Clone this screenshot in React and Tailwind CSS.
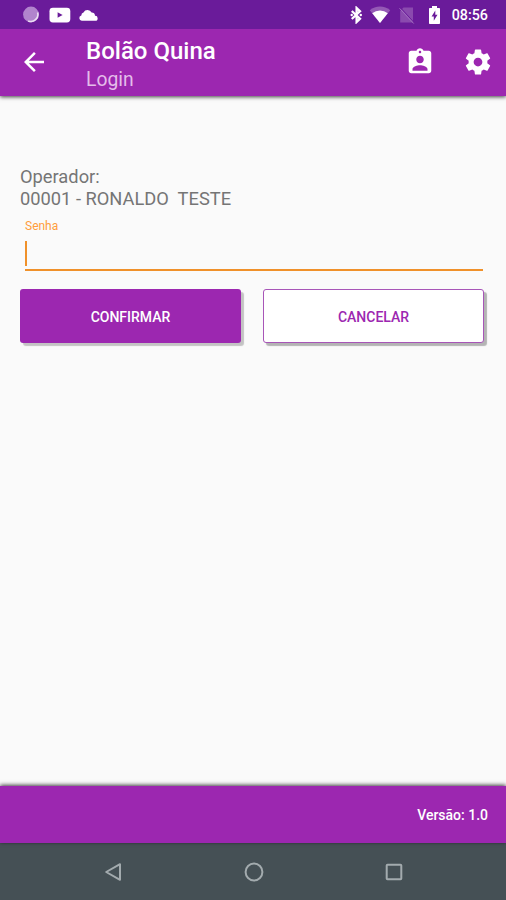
import React, { useState } from "react";
import { MdArrowBack } from "react-icons/md";

const StatusBar = () => (
  <div className="relative z-10 h-[29px] shrink-0 bg-[#6a1b9a] flex items-center justify-between pl-[23px] pr-[18px] text-white">
    <div className="flex items-center">
      <svg className="w-4 h-[17px]" viewBox="0 0 16 17">
        <circle cx="8" cy="8.5" r="7.9" fill="#b184cd" />
        <path
          d="M14.6 6.5a7 7 0 0 1-9.4 8.4"
          fill="none"
          stroke="#eadcf2"
          strokeWidth="1.6"
        />
      </svg>
      <svg className="ml-[10px] w-[22px] h-4" viewBox="0 0 22 16">
        <rect x="0.5" y="0.8" width="20.8" height="14.6" rx="3.4" fill="white" />
        <path d="M8.6 5.2v5.6l5-2.8z" fill="#6a1b9a" />
      </svg>
      <svg className="ml-[8px] w-[19px] h-3" viewBox="0 0 19 12">
        <path
          d="M2.8 11.8a2.7 2.7 0 0 1-.5-5.3A3.2 3.2 0 0 1 4.5 3.5 4.5 4.5 0 0 1 12.6 3.6 3.4 3.4 0 0 1 16 6.8a2.5 2.5 0 0 1 .3 5z"
          fill="white"
        />
      </svg>
    </div>
    <div className="flex items-center">
      <svg className="w-3 h-[18px]" viewBox="0 0 12 18">
        <path
          d="M1.8 5 10 12.8 6.6 16V2L10 5.2 1.8 13"
          fill="none"
          stroke="white"
          strokeWidth="2.3"
        />
        <circle cx="1.7" cy="9" r="1.2" fill="white" />
        <circle cx="10.8" cy="9" r="1.2" fill="white" />
      </svg>
      <svg className="ml-[7px] w-[22px] h-[17px]" viewBox="0 0 22 17">
        <path d="M11 17 .8 4.2a16 16 0 0 1 20.4 0z" fill="#9459b5" />
        <path d="M11 17 3.2 7.2a13 13 0 0 1 15.600 0z" fill="white" />
      </svg>
      <svg className="ml-[7px] w-[17px] h-[18px]" viewBox="0 0 17 18">
        <path d="M5.5 1.5h9.5v15H2.200V5z" fill="#8a4aae" />
        <path d="M2.5 1.7 16.5 17" stroke="#6a1b9a" strokeWidth="1" />
        <path d="M1.5 2.300 15.700 17.500" stroke="#a26fc0" strokeWidth="1" />
      </svg>
      <svg className="ml-[14px] w-[11px] h-[18px]" viewBox="0 0 11 18">
        <path
          d="M3 0h5v2h2.200a.8.8 0 0 1 .8.8v14.4a.8.8 0 0 1-.8.8H.8a.8.8 0 0 1-.8-.8V2.8A.8.8 0 0 1 .8 2H3z"
          fill="white"
        />
        <path d="M6.300 4.500 2.600 10.500h2.200v4.200L8.500 8.700H6.300z" fill="#6a1b9a" />
      </svg>
      <span className="ml-3 pt-[2px] text-[14.3px] leading-[17px] font-medium">
        08:56
      </span>
    </div>
  </div>
);

const AssignmentIcon = () => (
  <svg className="w-[30px] h-[30px]" viewBox="0 0 24 24" fill="currentColor">
    <path d="M19 3h-4.18C14.4 1.84 13.3 1 12 1c-1.3 0-2.4.84-2.82 2H5c-1.1 0-2 .9-2 2v14c0 1.1.9 2 2 2h14c1.1 0 2-.9 2-2V5c0-1.1-.9-2-2-2zm-7 0c.55 0 1 .45 1 1s-.45 1-1 1-1-.45-1-1 .45-1 1-1zm0 4c1.660 0 3 1.340 3 3s-1.340 3-3 3-3-1.340-3-3 1.340-3 3-3zm6 12H6v-1.400c0-2 4-3.100 6-3.100s6 1.100 6 3.100V19z" />
  </svg>
);

const SettingsIcon = () => (
  <svg className="w-[30px] h-[30px]" viewBox="0 0 24 24" fill="currentColor">
    <path d="M19.43 12.98c.04-.32.07-.64.07-.98s-.03-.66-.07-.98l2.11-1.65c.19-.15.24-.42.12-.64l-2-3.46c-.12-.22-.39-.3-.61-.22l-2.49 1c-.52-.4-1.08-.73-1.69-.98l-.38-2.65C14.46 2.18 14.25 2 14 2h-4c-.25 0-.46.18-.49.42l-.38 2.65c-.61.25-1.17.59-1.69.98l-2.49-1c-.23-.09-.49 0-.61.22l-2 3.46c-.13.22-.07.49.12.64l2.11 1.65c-.04.32-.07.65-.07.98s.03.66.07.98l-2.11 1.65c-.19.15-.24.42-.12.64l2 3.46c.12.22.39.3.61.22l2.49-1c.52.4 1.08.73 1.69.98l.38 2.65c.03.24.24.42.49.42h4c.25 0 .46-.18.49-.42l.38-2.65c.61-.25 1.17-.59 1.69-.98l2.49 1c.23.09.49 0 .61-.22l2-3.46c.12-.22.07-.49-.12-.64l-2.11-1.65zM12 15.5c-1.93 0-3.5-1.57-3.5-3.5s1.57-3.5 3.5-3.5 3.5 1.57 3.5 3.5-1.57 3.5-3.5 3.5z" />
  </svg>
);

const Header = () => (
  <header className="relative h-[67px] shrink-0 bg-[#9c27b0] shadow-[0_1px_4px_rgba(0,0,0,0.75)] flex items-center pb-px pl-[19px] pr-[13px] text-white">
    <button aria-label="Voltar">
      <MdArrowBack className="w-[30px] h-[30px]" />
    </button>
    <div className="ml-[37px] pt-[6px] flex-1">
      <h1 className="text-[24px] leading-[29px] font-medium">Bolão Quina</h1>
      <p className="text-[19.3px] leading-[28px] text-[#e4bdea]">Login</p>
    </div>
    <button aria-label="Operador">
      <AssignmentIcon />
    </button>
    <button aria-label="Configurações" className="ml-[28px]">
      <SettingsIcon />
    </button>
  </header>
);

const NavigationBar = () => (
  <nav className="h-[57px] shrink-0 bg-[#455055] flex items-center justify-between pl-[103px] pr-[102px]">
    <svg className="w-5 h-5" viewBox="0 0 20 20">
      <path
        d="M17 2.2v15.6L3.2 10z"
        fill="none"
        stroke="#a3abae"
        strokeWidth="2"
        strokeLinejoin="round"
      />
    </svg>
    <svg className="w-5 h-5" viewBox="0 0 20 20">
      <circle cx="10" cy="10" r="8.4" fill="none" stroke="#a3abae" strokeWidth="2" />
    </svg>
    <svg className="w-5 h-5" viewBox="0 0 20 20">
      <rect
        x="2.7"
        y="2.7"
        width="14.6"
        height="14.6"
        rx="0.8"
        fill="none"
        stroke="#a3abae"
        strokeWidth="2"
      />
    </svg>
  </nav>
);

const App = () => {
  const [senha, setSenha] = useState("");

  return (
    <div className="h-screen flex flex-col overflow-hidden bg-[#fafafa] font-['Roboto',sans-serif]">
      <StatusBar />
      <Header />

      <main className="flex-1 px-5 pt-[70px]">
        <p className="text-[18.3px] leading-[21.5px] text-[#757575] whitespace-pre">
          Operador:
          <br />
          {"00001 - RONALDO  TESTE"}
        </p>

        <div className="mt-[10px] ml-[5px] mr-[3px]">
          <label htmlFor="senha" className="block text-[12px] leading-[15px] text-[#ff9d3c]">
            Senha
          </label>
          <div className="mt-[7px] h-[30px] flex items-start border-b-2 border-[#f0912a]">
            <span className="w-[2px] h-[25px] bg-[#f0912a]" />
            <input
              id="senha"
              type="password"
              value={senha}
              onChange={(e) => setSenha(e.target.value)}
              className="flex-1 h-[25px] pl-1 bg-transparent outline-none text-lg"
            />
          </div>
        </div>

        <div className="mt-[18px] mr-[2px] grid grid-cols-2 gap-[22px] text-[14px] font-medium">
          <button className="h-[54px] pt-[2px] rounded-[3px] bg-[#9c27b0] text-white shadow-[3px_3px_1px_rgba(0,0,0,0.22)]">
            CONFIRMAR
          </button>
          <button className="h-[54px] pt-[2px] rounded-[3px] bg-white border border-[#a855b8] text-[#9c27b0] shadow-[3px_3px_1px_rgba(0,0,0,0.28)]">
            CANCELAR
          </button>
        </div>
      </main>

      <footer className="relative h-[57px] shrink-0 bg-[#9c27b0] shadow-[0_-1px_4px_rgba(0,0,0,0.75)] flex items-center justify-end pt-[2px] pr-[18px] text-[14px] font-medium text-white">
        Versão: 1.0
      </footer>
      <NavigationBar />
    </div>
  );
};

export default App;
